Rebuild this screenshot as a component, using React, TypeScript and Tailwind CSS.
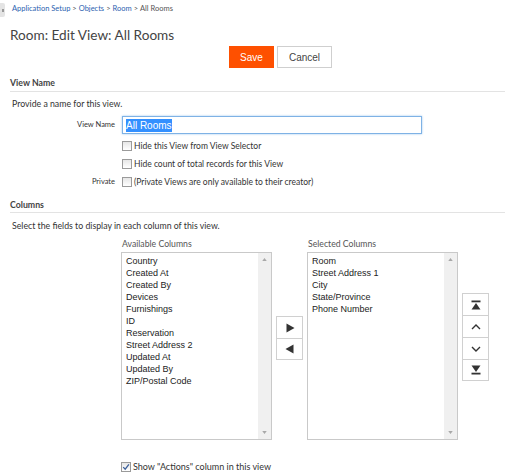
import React from "react";

const available = [
  "Country",
  "Created At",
  "Created By",
  "Devices",
  "Furnishings",
  "ID",
  "Reservation",
  "Street Address 2",
  "Updated At",
  "Updated By",
  "ZIP/Postal Code",
];

const selected = ["Room", "Street Address 1", "City", "State/Province", "Phone Number"];

const lato = "font-['Lato','Open_Sans',sans-serif]";
const arial = "font-['Liberation_Sans',Arial,sans-serif]";

function Checkbox({ checked = false }: { checked?: boolean }) {
  return (
    <span className="relative inline-flex h-[10px] w-[10px] shrink-0 items-center justify-center border border-[#9a9a9a] bg-gradient-to-b from-[#e6e6e6] to-[#ffffff]">
      {checked ? (
        <svg viewBox="0 0 10 10" className="h-[8px] w-[8px]">
          <path d="M1.5 5.2 L4 7.8 L8.6 1.8" fill="none" stroke="#3b5f9a" strokeWidth="1.6" />
        </svg>
      ) : null}
    </span>
  );
}

function ListBox({ items }: { items: string[] }) {
  return (
    <div className={`flex h-[188px] w-[151px] border border-[#c9c9c9] bg-white ${arial}`}>
      <ul className="flex-1 px-[4px] pt-[2px] text-[9px] leading-[12px] text-[#222]">
        {items.map((item) => (
          <li key={item} className="whitespace-nowrap">
            {item}
          </li>
        ))}
      </ul>
      <div className="flex w-[13px] flex-col items-center justify-between bg-[#f0f0f0] py-[5px]">
        <svg viewBox="0 0 6 4" className="h-[3px] w-[5px]">
          <path d="M0 4 L3 0 L6 4 Z" fill="#a8a8a8" />
        </svg>
        <svg viewBox="0 0 6 4" className="h-[3px] w-[5px]">
          <path d="M0 0 L3 4 L6 0 Z" fill="#a8a8a8" />
        </svg>
      </div>
    </div>
  );
}

function IconButton({ children, last = false }: { children: React.ReactNode; last?: boolean }) {
  return (
    <button
      type="button"
      className={`flex h-[22px] w-[27px] items-center justify-center border border-[#d0d0d0] bg-white ${
        last ? "" : "border-b-0"
      }`}
    >
      {children}
    </button>
  );
}

export default function App() {
  return (
    <div className={`relative h-[476px] w-[505px] overflow-hidden bg-white text-[#333] ${lato}`}>
      <div className="absolute left-0 top-[3px] flex h-[14px] w-[5px] items-center justify-center rounded-r-[2px] bg-[#e4e4e4]">
        <span className="h-[3px] w-[2px] bg-[#999]" />
      </div>

      <nav className="flex h-[18px] items-center pl-[12px] text-[7.5px] text-[#555]">
        <a className="text-[#2b62b0]">Application Setup</a>
        <span className="px-[2px]">&gt;</span>
        <a className="text-[#2b62b0]">Objects</a>
        <span className="px-[2px]">&gt;</span>
        <a className="text-[#2b62b0]">Room</a>
        <span className="px-[2px]">&gt;</span>
        <span>All Rooms</span>
      </nav>

      <h1 className="mt-[8px] pl-[10px] text-[13.6px] leading-[18px] text-[#444]">Room: Edit View: All Rooms</h1>

      <div className={`mt-[2px] flex gap-[3px] pl-[229px] ${arial}`}>
        <button type="button" className="h-[22px] w-[45px] bg-[#fe5000] text-[10px] text-white">
          Save
        </button>
        <button
          type="button"
          className="h-[22px] w-[55px] border border-[#cfcfcf] bg-white text-[10px] text-[#444]"
        >
          Cancel
        </button>
      </div>

      <section className="pl-[10px]">
        <h2 className="mt-[9px] border-b border-[#e3e3e3] pb-[2px] text-[8.75px] font-bold leading-[12px] text-[#444]">
          View Name
        </h2>
        <p className="mt-[6px] pl-[2px] text-[8.75px] leading-[12px]">Provide a name for this view.</p>

        <div className="mt-[6px] grid grid-cols-[105px_1fr] gap-x-[7px] text-[8.5px]">
          <label className="flex h-[18px] items-center justify-end text-[7.5px]">View Name</label>
          <div className="flex h-[18px] w-[300px] items-center border border-[#7fb2e5] bg-white px-[3px] shadow-[0_0_2px_#9cc6f0]">
            <span className={`bg-[#3390ff] text-[10px] leading-[13px] text-white ${arial}`}>All Rooms</span>
          </div>

          <div className="mt-[3px]" />
          <div className="mt-[3px] flex h-[18px] items-center gap-[2px]">
            <Checkbox />
            <span>Hide this View from View Selector</span>
          </div>

          <div />
          <div className="flex h-[18px] items-center gap-[2px]">
            <Checkbox />
            <span>Hide count of total records for this View</span>
          </div>

          <label className="flex h-[18px] items-center justify-end text-[7.5px]">Private</label>
          <div className="flex h-[18px] items-center gap-[2px]">
            <Checkbox />
            <span>(Private Views are only available to their creator)</span>
          </div>
        </div>

        <h2 className="mt-[8px] border-b border-[#e3e3e3] pb-[1px] text-[8.75px] font-bold leading-[12px] text-[#444]">
          Columns
        </h2>
        <p className="mt-[7px] pl-[2px] text-[8.75px] leading-[12px]">
          Select the fields to display in each column of this view.
        </p>

        <div className="mt-[6px] flex items-start gap-[4px] pl-[111px]">
          <div>
            <div className="pl-[1px] text-[8.7px] leading-[12px] text-[#555]">Available Columns</div>
            <div className="mt-[2px]">
              <ListBox items={available} />
            </div>
          </div>

          <div className="flex flex-col pt-[78px]">
            <IconButton>
              <svg viewBox="0 0 10 10" className="h-[10px] w-[10px]">
                <path d="M1.5 0.5 L9.5 5 L1.5 9.5 Z" fill="#333" />
              </svg>
            </IconButton>
            <IconButton last>
              <svg viewBox="0 0 10 10" className="h-[10px] w-[10px]">
                <path d="M8.5 0.5 L0.5 5 L8.5 9.5 Z" fill="#333" />
              </svg>
            </IconButton>
          </div>

          <div>
            <div className="pl-[1px] text-[8.7px] leading-[12px] text-[#555]">Selected Columns</div>
            <div className="mt-[2px]">
              <ListBox items={selected} />
            </div>
          </div>

          <div className="flex flex-col pt-[55px]">
            <IconButton>
              <svg viewBox="0 0 10 10" className="h-[10px] w-[10px]">
                <rect x="0.5" y="0.5" width="9" height="1.8" fill="#333" />
                <path d="M5 3 L9.5 9.5 L0.5 9.5 Z" fill="#333" />
              </svg>
            </IconButton>
            <IconButton>
              <svg viewBox="0 0 10 10" className="h-[10px] w-[10px]">
                <path d="M1 7 L5 3 L9 7" fill="none" stroke="#333" strokeWidth="1.4" />
              </svg>
            </IconButton>
            <IconButton>
              <svg viewBox="0 0 10 10" className="h-[10px] w-[10px]">
                <path d="M1 3 L5 7 L9 3" fill="none" stroke="#333" strokeWidth="1.4" />
              </svg>
            </IconButton>
            <IconButton last>
              <svg viewBox="0 0 10 10" className="h-[10px] w-[10px]">
                <path d="M0.5 0.5 L9.5 0.5 L5 7 Z" fill="#333" />
                <rect x="0.5" y="7.7" width="9" height="1.8" fill="#333" />
              </svg>
            </IconButton>
          </div>
        </div>

        <div className="mt-[18px] flex h-[18px] items-center gap-[2px] pl-[111px] text-[9px]">
          <Checkbox checked />
          <span>Show "Actions" column in this view</span>
        </div>
      </section>
    </div>
  );
}
